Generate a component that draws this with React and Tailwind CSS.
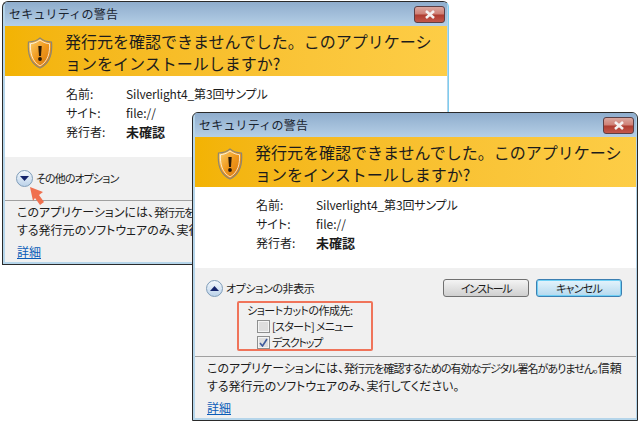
const font = { fontFamily: '"Noto Sans CJK JP", sans-serif' };

function Shield({ id }) {
  return (
    <svg width="26" height="32" viewBox="0 0 26 32">
      <defs>
        <linearGradient id={id} x1="0" y1="0" x2="1" y2="1">
          <stop offset="0" stopColor="#fcd777" />
          <stop offset="0.5" stopColor="#f0981c" />
          <stop offset="1" stopColor="#d0700c" />
        </linearGradient>
      </defs>
      <path d="M13 1 C9.500 4 5.500 5 1.500 5 C0.500 16 2.500 26 13 31 C23.500 26 25.500 16 24.500 5 C20.500 5 16.500 4 13 1Z" fill={`url(#${id})`} stroke="#8f8672" strokeWidth="1.200" />
      <path d="M13 3 C9.500 5.500 6.500 6.500 3.500 6.700 C3 16 5 24.500 13 29 C21 24.500 23 16 22.500 6.700 C19.500 6.500 16.500 5.500 13 3Z" fill="none" stroke="#fff" strokeOpacity="0.75" strokeWidth="1" />
      <path d="M11.300 9 H14.700 L14 19 H12Z" fill="#2b1a08" />
      <circle cx="13" cy="22" r="1.900" fill="#2b1a08" />
    </svg>
  );
}

function Chevron({ up }) {
  return (
    <span className="flex h-[17px] w-[17px] shrink-0 items-center justify-center rounded-full border border-[#7f9db9] bg-gradient-to-b from-[#f4f8fc] to-[#bcd3ea]">
      <svg width="9" height="5" viewBox="0 0 9 5">
        <path d={up ? "M4.500 0 L9 5 H0Z" : "M0 0 H9 L4.500 5Z"} fill="#14246b" />
      </svg>
    </span>
  );
}

function CloseButton() {
  return (
    <span className="flex h-[17px] w-[31px] items-center justify-center rounded-[3px] border border-[#5c3f44] bg-[linear-gradient(#dba79f,#cf7f74_48%,#ad3c30_52%,#c4574a)]">
      <svg width="12" height="9" viewBox="0 0 12 9">
        <path d="M2 1 L10 8 M10 1 L2 8" stroke="#f4f1f0" strokeWidth="2.600" />
      </svg>
    </span>
  );
}

function Banner({ id }) {
  return (
    <div className="flex h-[50px] shrink-0 items-start bg-gradient-to-r from-[#f3b303] to-[#fdcd46]">
      <div className="ml-[22px] mt-[11px] w-[39px] shrink-0">
        <Shield id={id} />
      </div>
      <p className="ml-[-1px] mt-[4px] text-[16px] leading-[22px] text-[#1c1c1c]">
        発行元を確認できませんでした。このアプリケーションをインストールしますか?
      </p>
    </div>
  );
}

function Info() {
  return (
    <div className="ml-[61px] grid grid-cols-[61px_1fr] pt-[8px] text-[12px] leading-[19px] text-[#1c1c1c] [font-feature-settings:'palt']">
      <span>名前:</span>
      <span className="ml-[-1px] tracking-[-0.15px]">Silverlight4_第3回サンプル</span>
      <span>サイト:</span>
      <span className="ml-[-1px]">file://</span>
      <span>発行者:</span>
      <span className="ml-[-1px] text-[13px] font-bold">未確認</span>
    </div>
  );
}

function Footer() {
  return (
    <div className="border-t border-[#a0a0a0] pl-[12px] pt-[2px] text-[12px] leading-[18px] whitespace-nowrap text-[#1c1c1c] [font-feature-settings:'palt']">
      <p>
        このアプリケーションには、
        <span className="text-[11px] tracking-[-0.95px]">発行元を確認するための有効なデジタル署名がありません。</span>
        信頼
        <br />
        する発行元のソフトウェアのみ、実行してください。
      </p>
      <a className="mt-[5px] block leading-[16px] text-[#0a5cb8] underline">詳細</a>
    </div>
  );
}

function Frame({ className, children }) {
  return (
    <section
      style={font}
      className={`absolute flex flex-col overflow-hidden rounded-t-[6px] border border-[#2a2a2a] bg-[#b5d5ea] pb-[2px] pl-[2px] ${className}`}
    >
      <header className="flex h-[24px] shrink-0 items-center justify-between bg-gradient-to-b from-[#8fadcd] to-[#b5cfe6] pl-[4px]">
        <span className="text-[12px] tracking-[0.2px] text-[#1a2430]">セキュリティの警告</span>
        <span className="mr-[2px] mt-[1px]"><CloseButton /></span>
      </header>
      {children}
    </section>
  );
}

export default function App() {
  return (
    <div className="relative h-[421px] w-[640px] overflow-hidden bg-white">
      <Frame className="left-[2px] top-[1px] h-[264px] w-[447px] border-r-[#7dcdf0] pr-[1px]">
        <Banner id="shA" />
        <div className="h-[81px] shrink-0 bg-white"><Info /></div>
        <div className="flex min-h-0 flex-1 flex-col overflow-hidden bg-[#f0f0f0]">
          <div className="flex h-[43px] shrink-0 items-center gap-[3px] pl-[11px] text-[11px] tracking-[-0.9px] text-[#1c1c1c] [font-feature-settings:'palt']">
            <Chevron />
            <span>その他のオプション</span>
          </div>
          <Footer />
        </div>
      </Frame>
      <svg className="absolute left-[28px] top-[186px]" width="18" height="20" viewBox="0 0 18 20">
        <path d="M2 1 L15 6 L11 9 L16 16 L12 19 L7 12 L5 15Z" fill="#f0704e" />
      </svg>

      <Frame className="left-[192px] top-[112px] h-[309px] w-[446px] pr-[1px]">
        <Banner id="shB" />
        <div className="h-[81px] shrink-0 bg-white"><Info /></div>
        <div className="flex min-h-0 flex-1 flex-col overflow-hidden bg-[#f0f0f0] [font-feature-settings:'palt']">
          <div className="mt-[11px] flex h-[18px] shrink-0 items-center justify-between pl-[11px] pr-[14px] text-[11px] text-[#1c1c1c]">
            <div className="flex items-center gap-[3px]">
              <Chevron up />
              <span className="tracking-[-0.4px]">オプションの非表示</span>
            </div>
            <div className="flex gap-[7px]">
              <button className="h-[18px] w-[86px] rounded-[3px] border border-[#707070] bg-gradient-to-b from-[#f4f4f4] to-[#cfcfcf] text-[11px] leading-[16px] tracking-[-1.4px]">インストール</button>
              <button className="h-[18px] w-[86px] rounded-[3px] border border-[#3c7fb1] bg-gradient-to-b from-[#e5f4fc] to-[#b5d9ee] text-[11px] leading-[16px] tracking-[-0.8px] shadow-[inset_0_0_0_1px_#6fd0f5]">キャンセル</button>
            </div>
          </div>
          <div className="ml-[42px] mt-[4px] h-[50px] w-[136px] shrink-0 rounded-[2px] border-2 border-[#f0745a] pl-[8px] text-[11px] whitespace-nowrap text-[#1c1c1c]">
            <div className="leading-[15px] tracking-[-0.5px]">ショートカットの作成先:</div>
            <div className="ml-[10px] flex h-[16px] items-center gap-[2px]">
              <span className="h-[13px] w-[13px] shrink-0 border border-[#8e8f8f] bg-[#dedede] shadow-[inset_0_0_0_1px_#f4f4f4]" />
              <span className="tracking-[-0.7px]">[スタート] メニュー</span>
            </div>
            <div className="ml-[10px] flex h-[16px] items-center gap-[2px]">
              <span className="flex h-[13px] w-[13px] shrink-0 items-center justify-center border border-[#8e8f8f] bg-[#dedede] shadow-[inset_0_0_0_1px_#f4f4f4]">
                <svg width="9" height="9" viewBox="0 0 9 9"><path d="M1 5 L3.500 8 L8 1" fill="none" stroke="#3f5a9c" strokeWidth="1.600" /></svg>
              </span>
              <span className="tracking-[-1.2px]">デスクトップ</span>
            </div>
          </div>
          <div className="mt-[5px] flex-1"><Footer /></div>
        </div>
      </Frame>
    </div>
  );
}
